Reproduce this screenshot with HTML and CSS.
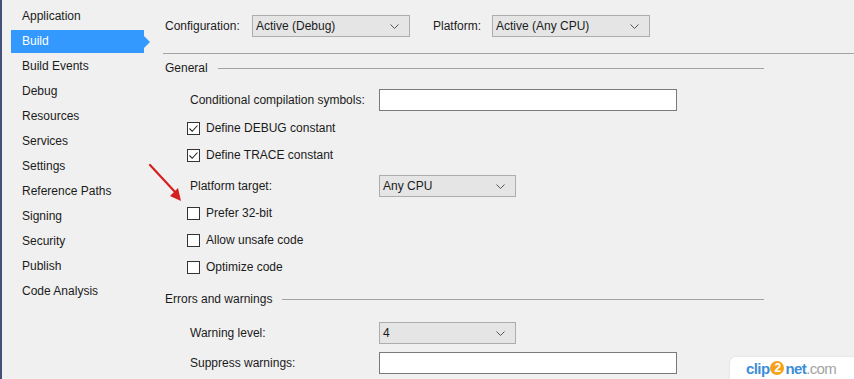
FILE: index.html
```html
<!DOCTYPE html>
<html>
<head>
<meta charset="utf-8">
<link rel="stylesheet" href="styles.css">
</head>
<body>
<div class="window">
  <nav class="sidebar">
    <div class="nav-item">Application</div>
    <div class="nav-item selected">Build</div>
    <div class="nav-item">Build Events</div>
    <div class="nav-item">Debug</div>
    <div class="nav-item">Resources</div>
    <div class="nav-item">Services</div>
    <div class="nav-item">Settings</div>
    <div class="nav-item">Reference Paths</div>
    <div class="nav-item">Signing</div>
    <div class="nav-item">Security</div>
    <div class="nav-item">Publish</div>
    <div class="nav-item">Code Analysis</div>
  </nav>
  <main class="content">
    <div class="toolbar">
      <span class="tb-label cfg">Configuration:</span>
      <div class="select wide"><span>Active (Debug)</span><svg class="chev" width="9" height="5" viewBox="0 0 9 5"><path d="M0.5 0.5 L4.5 4.5 L8.5 0.5" fill="none" stroke="#555" stroke-width="1"/></svg></div>
      <span class="tb-label plat">Platform:</span>
      <div class="select wide"><span>Active (Any CPU)</span><svg class="chev" width="9" height="5" viewBox="0 0 9 5"><path d="M0.5 0.5 L4.5 4.5 L8.5 0.5" fill="none" stroke="#555" stroke-width="1"/></svg></div>
    </div>
    <div class="rule"></div>

    <section class="group general">
      <div class="group-head"><span>General</span><div class="head-line"></div></div>
      <div class="row field cond">
        <span class="label">Conditional compilation symbols:</span>
        <div class="textbox long"></div>
      </div>
      <div class="row check first">
        <span class="box"><svg width="11" height="11" viewBox="0 0 11 11"><path d="M1.5 5.5 L4.2 8.3 L9.5 2.5" fill="none" stroke="#222" stroke-width="1.1"/></svg></span>
        <span>Define DEBUG constant</span>
      </div>
      <div class="row check">
        <span class="box"><svg width="11" height="11" viewBox="0 0 11 11"><path d="M1.5 5.5 L4.2 8.3 L9.5 2.5" fill="none" stroke="#222" stroke-width="1.1"/></svg></span>
        <span>Define TRACE constant</span>
      </div>
      <div class="row field plat-target">
        <span class="label">Platform target:</span>
        <div class="select short"><span>Any CPU</span><svg class="chev" width="9" height="5" viewBox="0 0 9 5"><path d="M0.5 0.5 L4.5 4.5 L8.5 0.5" fill="none" stroke="#555" stroke-width="1"/></svg></div>
      </div>
      <div class="row check after-select">
        <span class="box"></span>
        <span>Prefer 32-bit</span>
      </div>
      <div class="row check">
        <span class="box"></span>
        <span>Allow unsafe code</span>
      </div>
      <div class="row check">
        <span class="box"></span>
        <span>Optimize code</span>
      </div>
    </section>

    <section class="group errors">
      <div class="group-head"><span>Errors and warnings</span><div class="head-line"></div></div>
      <div class="row field warn">
        <span class="label">Warning level:</span>
        <div class="select short"><span>4</span><svg class="chev" width="9" height="5" viewBox="0 0 9 5"><path d="M0.5 0.5 L4.5 4.5 L8.5 0.5" fill="none" stroke="#555" stroke-width="1"/></svg></div>
      </div>
      <div class="row field suppress">
        <span class="label">Suppress warnings:</span>
        <div class="textbox long"></div>
      </div>
    </section>
  </main>

  <svg class="red-arrow" width="40" height="44" viewBox="0 0 40 44">
    <path d="M2 2 L28 30" stroke="#d51f1f" stroke-width="2.2" fill="none" stroke-linecap="round"/>
    <path d="M33 38 L22 33 L30 25 Z" fill="#d51f1f"/>
  </svg>

  <div class="watermark"><span class="wm-blue">clip</span><span class="wm-two">2</span><span class="wm-blue">net</span><span class="wm-grey">.com</span></div>
</div>
</body>
</html>
```

FILE: styles.css
```css
html, body {
  margin: 0;
  padding: 0;
  background: #f0f0f0;
}

body {
  font-family: "Segoe UI", "Liberation Sans", Arial, sans-serif;
  font-size: 12px;
  color: #1b1b1b;
}

.window {
  position: relative;
  display: flex;
  width: 854px;
  height: 379px;
  overflow: hidden;
  border-left: 2px solid #45507a;
  box-sizing: border-box;
}

/* Sidebar */
.sidebar {
  width: 148px;
  flex: none;
  padding-top: 4px;
}

.nav-item {
  height: 25px;
  line-height: 25px;
  padding-left: 20px;
  white-space: nowrap;
}

.nav-item.selected {
  position: relative;
  margin: 1px 6px 1px 9px;
  height: 23px;
  line-height: 23px;
  padding-left: 11px;
  background: #3399ff;
  color: #ffffff;
}

.nav-item.selected::after {
  content: "";
  position: absolute;
  right: -6px;
  top: 6px;
  border-left: 6px solid #3399ff;
  border-top: 6px solid transparent;
  border-bottom: 6px solid transparent;
}

/* Content */
.content {
  flex: 1;
  padding-top: 15px;
  padding-left: 15px;
}

.toolbar {
  display: flex;
  align-items: center;
  height: 22px;
}

.tb-label.cfg {
  width: 87px;
}

.tb-label.plat {
  margin-left: 23px;
  width: 59px;
}

.select {
  position: relative;
  display: flex;
  align-items: center;
  height: 22px;
  box-sizing: border-box;
  border: 1px solid #adadad;
  background: #e5e5e5;
  padding-left: 3px;
}

.select.wide {
  width: 158px;
}

.select.short {
  width: 137px;
}

.chev {
  position: absolute;
  right: 10px;
  top: 8px;
}

.rule {
  height: 1px;
  background: #a3a3a3;
  margin-top: 16px;
  margin-left: -2px;
}

.group {
  width: 599px;
  display: flex;
  flex-direction: column;
}

.group-head {
  display: flex;
  align-items: center;
  height: 16px;
  line-height: 16px;
}

.general .group-head {
  margin-top: 6px;
}

.head-line {
  flex: 1;
  height: 1px;
  background: #a3a3a3;
  margin-left: 10px;
}

.row {
  display: flex;
  align-items: center;
}

.field {
  height: 22px;
  padding-left: 25px;
}

.field .label {
  width: 189px;
  flex: none;
}

.textbox {
  height: 22px;
  box-sizing: border-box;
  border: 1px solid #7a7a7a;
  background: #ffffff;
}

.textbox.long {
  width: 298px;
}

.check {
  height: 20px;
  padding-left: 22px;
  margin-top: 7px;
}

.check.first {
  margin-top: 7px;
}

.cond {
  margin-top: 13px;
}

.plat-target {
  margin-top: 10px;
}

.check.after-select {
  margin-top: 6px;
}

.box {
  width: 13px;
  height: 13px;
  box-sizing: border-box;
  border: 1px solid #333333;
  background: #ffffff;
  margin-right: 6px;
  display: flex;
  align-items: center;
  justify-content: center;
  flex: none;
}

.box svg {
  display: block;
}

.errors .group-head {
  margin-top: 14px;
}

.warn {
  margin-top: 15px;
}

.suppress {
  margin-top: 8px;
}

/* Overlays */
.red-arrow {
  position: absolute;
  left: 146px;
  top: 163px;
}

.watermark {
  position: absolute;
  right: 0;
  bottom: 0;
  width: 124px;
  height: 22px;
  background: #ffffff;
  border-radius: 6px 0 0 0;
  box-shadow: 0 0 3px rgba(0, 0, 0, 0.08);
  display: flex;
  align-items: center;
  padding-left: 16px;
  box-sizing: border-box;
  font-family: "Liberation Sans", Arial, sans-serif;
  font-size: 15px;
  letter-spacing: -0.6px;
}

.wm-blue {
  color: #3d8ed8;
  font-weight: bold;
}

.wm-two {
  display: inline-flex;
  align-items: center;
  justify-content: center;
  width: 14px;
  height: 14px;
  border-radius: 50%;
  background: #f4a21c;
  color: #ffffff;
  font-weight: bold;
  font-size: 12px;
  margin: 0 1px;
}

.wm-grey {
  color: #a3a3a3;
}
```
